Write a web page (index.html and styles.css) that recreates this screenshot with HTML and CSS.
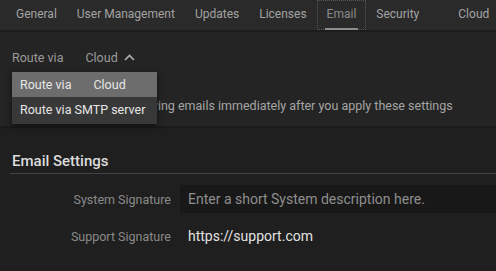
FILE: index.html
```html
<!DOCTYPE html>
<html lang="en">
  <head>
    <meta charset="UTF-8">
    <title>Email Settings</title>
    <link rel="stylesheet" href="styles.css">
  </head>
  <body>
    <nav class="tabs">
      <a class="tab">General</a>
      <a class="tab">User Management</a>
      <a class="tab">Updates</a>
      <a class="tab">Licenses</a>
      <a class="tab active">Email</a>
      <a class="tab">Security</a>
      <a class="tab cloud">Cloud</a>
    </nav>

    <section class="routing">
      <div class="route-select">
        <span class="route-label">Route via</span>
        <span class="route-value">Cloud</span>
        <svg class="chevron" width="11" height="7" viewBox="0 0 11 7">
          <path d="M1 6 L5.5 1.5 L10 6" fill="none" stroke="#b0b0b0" stroke-width="1.6"/>
        </svg>
      </div>
      <p class="hint">Your users will start receiving emails immediately after you apply these settings</p>

      <!-- open dropdown -->
      <ul class="menu">
        <li class="menu-item selected"><span class="route-label">Route via</span><span>Cloud</span></li>
        <li class="menu-item">Route via SMTP server</li>
      </ul>
    </section>

    <section class="settings">
      <h3>Email Settings</h3>
      <div class="field">
        <label for="system-signature">System Signature</label>
        <input type="text" id="system-signature" placeholder="Enter a short System description here.">
      </div>
      <div class="field">
        <label>Support Signature</label>
        <span class="value">https://support.com</span>
      </div>
    </section>
  </body>
</html>
```

FILE: styles.css
```css
body {
  margin: 0;
  background: #1f1f1f;
  font-family: Roboto, "Noto Sans", sans-serif;
  color: #a8a8a8;
  overflow: hidden;
}

.tabs {
  display: flex;
  height: 30px;
  padding-left: 6px;
  background: #2a2a2a;
  border-bottom: 2px solid #1c1c1c;
}

.tab {
  position: relative;
  padding: 0 10px;
  line-height: 28px;
  font-size: 12px;
  color: #a3a3a3;
  white-space: nowrap;
}

.tab.active {
  color: #8a8a8a;
  outline: 1px dotted #555;
  outline-offset: -1px;
}

.tab.active::after {
  content: "";
  position: absolute;
  left: 8px;
  right: 8px;
  bottom: 0;
  height: 2px;
  background: #8c8c8c;
}

.tab.cloud {
  margin-left: 19px;
}

.routing {
  position: relative;
  background: #242424;
  padding: 16px 12px 13px;
  border-bottom: 2px solid #1b1b1b;
}

.route-select {
  display: flex;
  align-items: center;
  height: 18px;
  font-size: 12.5px;
  color: #9a9a9a;
}

.route-label {
  margin-right: 22px;
}

.chevron {
  margin-left: 6px;
}

.hint {
  margin: 32px 0 0;
  font-size: 12.5px;
  color: #a5a5a5;
  white-space: nowrap;
}

.menu {
  position: absolute;
  top: 40px;
  left: 12px;
  width: 145px;
  margin: 0;
  padding: 0 0 2px;
  list-style: none;
  background: #383838;
  box-shadow: 0 2px 6px rgba(0, 0, 0, 0.6);
  font-size: 12.5px;
  color: #e6e6e6;
}

.menu-item {
  display: flex;
  align-items: center;
  height: 25px;
  padding-left: 8px;
  white-space: nowrap;
}

.menu-item.selected {
  background: #6d6d6d;
}

.settings {
  padding: 24px 0 0 10px;
}

.settings h3 {
  margin: 0 0 11px;
  padding: 0 0 3px 2px;
  font-size: 15px;
  font-weight: 500;
  color: #dcdcdc;
  border-bottom: 1px solid #434343;
}

.field {
  display: flex;
  align-items: center;
  height: 28px;
  margin-bottom: 9px;
}

.field label {
  width: 161px;
  text-align: right;
  padding-right: 9px;
  font-size: 12.5px;
  color: #8a8a8a;
}

.field input {
  flex: 1;
  height: 28px;
  box-sizing: border-box;
  padding: 0 8px;
  border: none;
  background: #181818;
  font-family: inherit;
  font-size: 14px;
  color: #ccc;
}

.field input::placeholder {
  color: #8e8e8e;
}

.value {
  padding-left: 8px;
  font-size: 14px;
  color: #e2e2e2;
}
```
